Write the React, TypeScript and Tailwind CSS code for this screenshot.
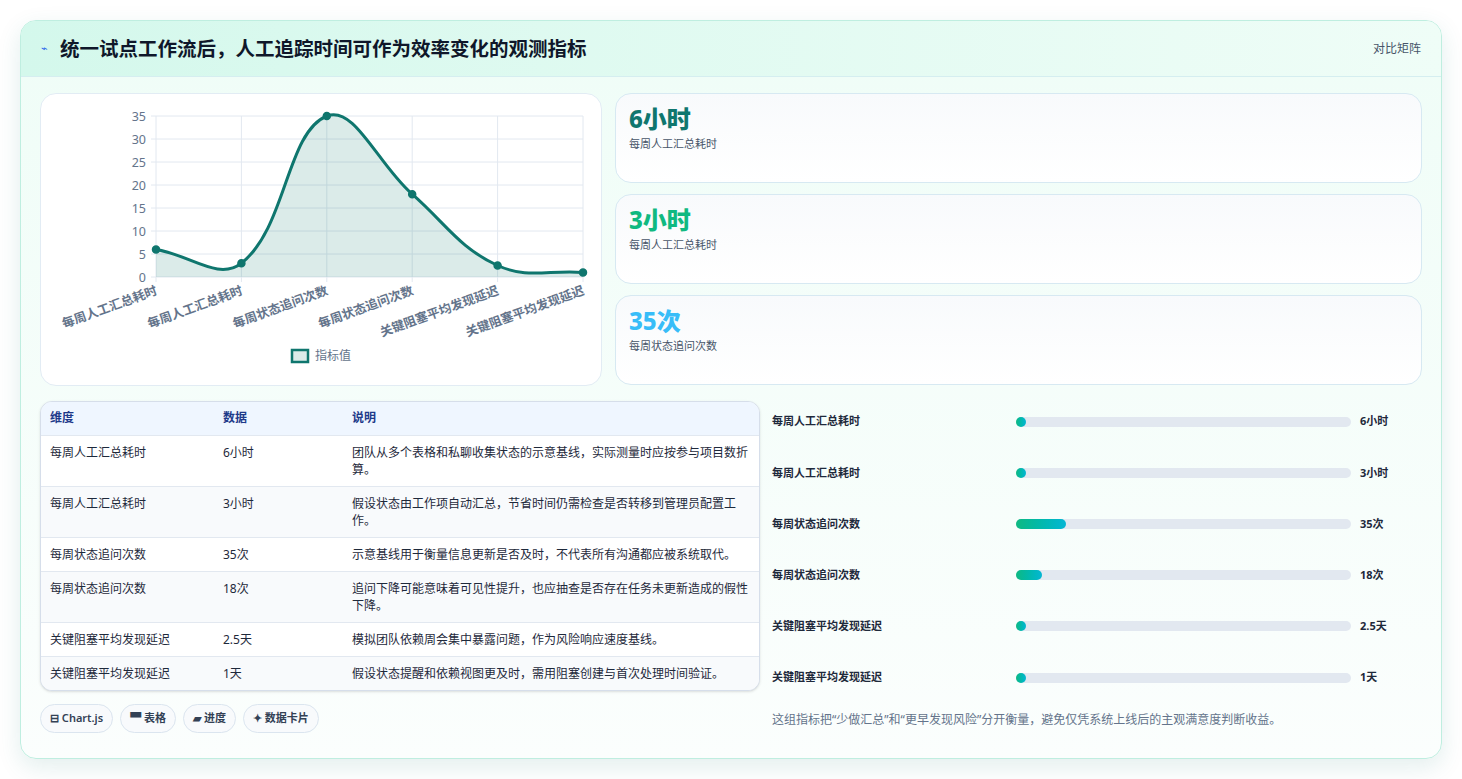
import React from "react";

const F = { fontFamily: '"Noto Sans", "Noto Sans CJK SC", sans-serif' };

const xs = [155, 240.4, 325.8, 411.2, 496.6, 582];
const vals = [6, 3, 35, 18, 2.5, 1];
const ys = vals.map((v) => 276 - v * 4.6);
const labels = ["每周人工汇总耗时", "每周人工汇总耗时", "每周状态追问次数", "每周状态追问次数", "关键阻塞平均发现延迟", "关键阻塞平均发现延迟"];

function curve() {
  const pts = xs.map((x, i) => [x, ys[i]]);
  const t = 0.4;
  const cps = pts.map((p, i) => {
    const prev = pts[Math.max(0, i - 1)];
    const next = pts[Math.min(pts.length - 1, i + 1)];
    const d01 = Math.hypot(p[0] - prev[0], p[1] - prev[1]);
    const d12 = Math.hypot(next[0] - p[0], next[1] - p[1]);
    const s = d01 + d12 || 1;
    const fa = (t * d01) / s, fb = (t * d12) / s;
    return {
      prev: [p[0] - fa * (next[0] - prev[0]), p[1] - fa * (next[1] - prev[1])],
      next: [p[0] + fb * (next[0] - prev[0]), p[1] + fb * (next[1] - prev[1])],
    };
  });
  let d = `M${pts[0][0]},${pts[0][1]}`;
  for (let i = 1; i < pts.length; i++) {
    d += ` C${cps[i - 1].next[0]},${cps[i - 1].next[1]} ${cps[i].prev[0]},${cps[i].prev[1]} ${pts[i][0]},${pts[i][1]}`;
  }
  return d;
}

function Chart() {
  const d = curve();
  return (
    <svg width="561" height="292" viewBox="40 93 561 292" className="block">
      {[0, 5, 10, 15, 20, 25, 30, 35].map((v) => (
        <g key={v}>
          <line x1={150} x2={582} y1={276 - v * 4.6} y2={276 - v * 4.6} stroke="#e2e8f0" strokeWidth="1" />
          <text x={145} y={276 - v * 4.6 + 4.5} textAnchor="end" fontSize="12.5" fill="#64748b" style={F}>{v}</text>
        </g>
      ))}
      {xs.map((x, i) => (
        <line key={i} x1={x} x2={x} y1={115} y2={281} stroke="#e2e8f0" strokeWidth="1" />
      ))}
      <path d={`${d} L582,276 L155,276 Z`} fill="rgba(15,118,110,0.15)" />
      <path d={d} fill="none" stroke="#0f766e" strokeWidth="3" />
      {xs.map((x, i) => (
        <circle key={i} cx={x} cy={ys[i]} r="3.5" fill="#0f766e" stroke="#0f766e" strokeWidth="1.5" />
      ))}
      {xs.map((x, i) => (
        <text key={i} x={x + 2} y={293} textAnchor="end" fontSize="12.5" fontWeight="600" fill="#64748b" transform={`rotate(-20 ${x + 2} 293)`} style={F}>{labels[i]}</text>
      ))}
      <rect x={291} y={349} width={16} height={12} fill="rgba(15,118,110,0.15)" stroke="#0f766e" strokeWidth="2.5" />
      <text x={314} y={359} fontSize="12" fill="#64748b" style={F}>指标值</text>
    </svg>
  );
}

const stats = [
  { v: "6小时", c: "text-[#0f766e]", l: "每周人工汇总耗时" },
  { v: "3小时", c: "text-[#10b981]", l: "每周人工汇总耗时" },
  { v: "35次", c: "text-[#38bdf8]", l: "每周状态追问次数" },
];

const rows = [
  ["每周人工汇总耗时", "6小时", "团队从多个表格和私聊收集状态的示意基线，实际测量时应按参与项目数折算。"],
  ["每周人工汇总耗时", "3小时", "假设状态由工作项自动汇总，节省时间仍需检查是否转移到管理员配置工作。"],
  ["每周状态追问次数", "35次", "示意基线用于衡量信息更新是否及时，不代表所有沟通都应被系统取代。"],
  ["每周状态追问次数", "18次", "追问下降可能意味着可见性提升，也应抽查是否存在任务未更新造成的假性下降。"],
  ["关键阻塞平均发现延迟", "2.5天", "模拟团队依赖周会集中暴露问题，作为风险响应速度基线。"],
  ["关键阻塞平均发现延迟", "1天", "假设状态提醒和依赖视图更及时，需用阻塞创建与首次处理时间验证。"],
];

export default function App() {
  return (
    <div className="min-h-screen bg-white p-5" style={F}>
      <div className="w-[1422px] h-[739px] rounded-2xl border border-[#bfeee0] bg-gradient-to-b from-[#effdf7] to-[#fbfefd] shadow-[0_8px_24px_rgba(15,118,110,0.12)] overflow-hidden">
        <div className="h-[56px] flex items-center justify-between px-5 bg-gradient-to-r from-[#d4f8ec] to-[#effdf7] border-b border-[#d5eef0]">
          <div className="flex items-center gap-3">
            <span className="text-[11px] text-[#2563eb]">⌁</span>
            <span className="text-[19.5px] font-bold text-[#0f172a]">统一试点工作流后，人工追踪时间可作为效率变化的观测指标</span>
          </div>
          <span className="text-[12px] text-[#475569]">对比矩阵</span>
        </div>
        <div className="px-[19px] pt-[16px]">
          <div className="flex gap-[13px]">
            <div className="w-[562px] h-[293px] shrink-0 rounded-2xl border border-[#e2ecf4] bg-white overflow-hidden">
              <Chart />
            </div>
            <div className="flex-1 flex flex-col gap-[11px]">
              {stats.map((s, i) => (
                <div key={i} className="h-[90px] rounded-2xl border border-[#d7e9f2] bg-gradient-to-b from-[#f8fafc] to-white px-[13px] pt-[9px]">
                  <div className={`text-[24px] font-extrabold leading-[32px] ${s.c}`}>{s.v}</div>
                  <div className="text-[11px] text-[#475569] mt-[1px]">{s.l}</div>
                </div>
              ))}
            </div>
          </div>
          <div className="flex gap-3 mt-[15px]">
            <div className="w-[720px] shrink-0">
              <div className="rounded-xl border border-[#d6deea] overflow-hidden bg-white shadow-sm">
                <table className="w-full text-[12px] border-collapse">
                  <thead>
                    <tr className="bg-[#eff6ff] h-[33px] text-[#1e3a8a] font-semibold text-left">
                      <th className="pl-[9px] w-[182px] font-semibold">维度</th>
                      <th className="w-[129px] font-semibold">数据</th>
                      <th className="font-semibold">说明</th>
                    </tr>
                  </thead>
                  <tbody>
                    {rows.map((r, i) => (
                      <tr key={i} className={`border-t border-[#e2e8f0] align-top text-[#1e293b] ${i % 2 ? "bg-[#f8fafc]" : "bg-white"}`}>
                        <td className="pl-[9px] py-[8px] leading-[17px]">{r[0]}</td>
                        <td className="py-[8px] leading-[17px]">{r[1]}</td>
                        <td className="py-[8px] pr-[9px] leading-[17px]">{r[2]}</td>
                      </tr>
                    ))}
                  </tbody>
                </table>
              </div>
              <div className="flex gap-[7px] mt-[13px]">
                {["⊟ Chart.js", "▀ 表格", "▰ 进度", "✦ 数据卡片"].map((p) => (
                  <span key={p} className="h-[29px] px-[9px] flex items-center rounded-full border border-[#dbe5ef] bg-[#f8fafc] text-[11px] font-semibold text-[#334155]">{p}</span>
                ))}
              </div>
            </div>
            <div className="flex-1">
              <div className="flex flex-col -mt-[5px]">
                {[["每周人工汇总耗时", 6, "6小时"], ["每周人工汇总耗时", 3, "3小时"], ["每周状态追问次数", 35, "35次"], ["每周状态追问次数", 18, "18次"], ["关键阻塞平均发现延迟", 2.5, "2.5天"], ["关键阻塞平均发现延迟", 1, "1天"]].map(([l, v, t], i) => (
                  <div key={i} className="h-[51.2px] flex items-center">
                    <span className="w-[244px] text-[11px] font-semibold text-[#1e293b]">{l}</span>
                    <div className="w-[335px] h-[10px] rounded-full bg-[#e2e8f0]">
                      <div className="h-full rounded-full bg-gradient-to-r from-[#10b981] to-[#06b6d4]" style={{ width: Math.max(10, ((v as number) / 234) * 335) }} />
                    </div>
                    <span className="ml-[9px] text-[11px] font-bold text-[#1e293b]">{t}</span>
                  </div>
                ))}
              </div>
              <div className="mt-[8px] text-[12px] text-[#64748b]">这组指标把“少做汇总”和“更早发现风险”分开衡量，避免仅凭系统上线后的主观满意度判断收益。</div>
            </div>
          </div>
        </div>
      </div>
    </div>
  );
}
